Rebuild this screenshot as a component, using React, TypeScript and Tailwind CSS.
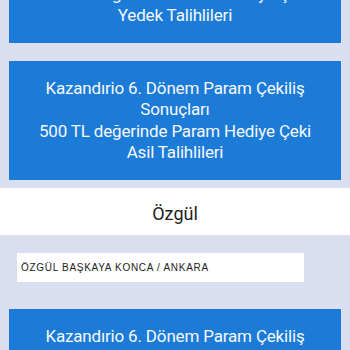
const FONT = "font-['Roboto','Noto_Sans',sans-serif]";

function ResultCard({ lines }: { lines: string[] }) {
  return (
    <div
      className={`mx-[9px] bg-[#1c7bd7] px-4 py-[16.5px] text-center text-[17px] leading-[21.5px] tracking-[-0.01em] text-[#f4f8fd] ${FONT}`}
    >
      {lines.map((line) => (
        <div key={line}>{line}</div>
      ))}
    </div>
  );
}

export default function App() {
  return (
    <div className="h-[350px] overflow-hidden bg-[#d9dff0]">
      <div className="-mt-[76px] flex flex-col">
        <ResultCard
          lines={[
            "Kazandırio 6. Dönem Param Çekiliş",
            "Sonuçları",
            "500 TL değerinde Param Hediye Çeki",
            "Yedek Talihlileri",
          ]}
        />
        <div className="mt-[18px]">
          <ResultCard
            lines={[
              "Kazandırio 6. Dönem Param Çekiliş",
              "Sonuçları",
              "500 TL değerinde Param Hediye Çeki",
              "Asil Talihlileri",
            ]}
          />
        </div>

        <div
          className={`mt-[8px] flex h-[47px] items-center justify-center bg-white pt-[3px] text-[18px] text-[#222] ${FONT}`}
        >
          Özgül
        </div>

        <div className="ml-[17px] mt-[18px] flex h-[29px] w-[287px] items-center bg-white px-[4px]">
          <span className="font-['Liberation_Sans',Arial,sans-serif] text-[10px] tracking-[0.07em] text-[#222]">
            ÖZGÜL BAŞKAYA KONCA / ANKARA
          </span>
        </div>

        <div className="mt-[27px]">
          <ResultCard
            lines={[
              "Kazandırio 6. Dönem Param Çekiliş",
              "Sonuçları",
              "500 TL değerinde Param Hediye Çeki",
              "Asil Talihlileri",
            ]}
          />
        </div>
      </div>
    </div>
  );
}
